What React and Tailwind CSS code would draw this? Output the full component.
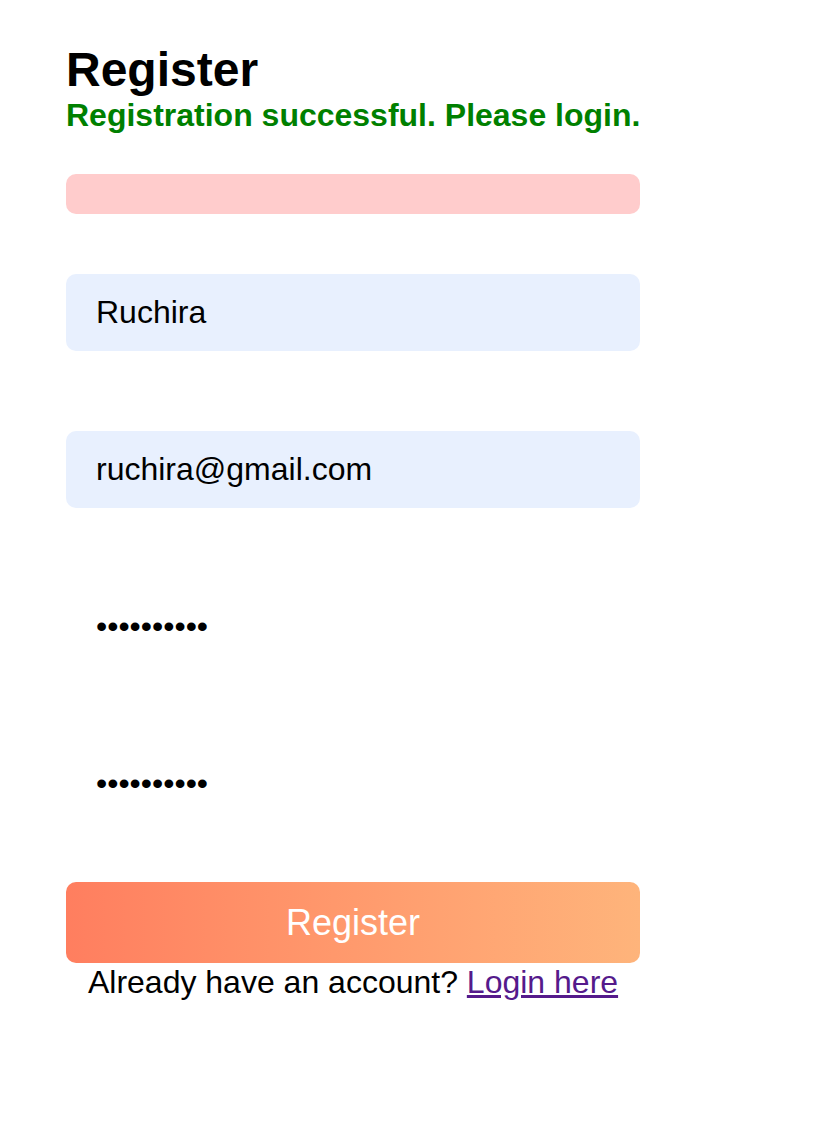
import React from "react";

export default function App() {
  const inputCls =
    "block w-full h-[77px] rounded-[10px] border-0 outline-none px-[30px] text-[32px] leading-[37px] text-black font-['Liberation_Sans',Arial,sans-serif]";
  return (
    <div className="min-h-[1132px] w-full bg-white font-['Liberation_Sans',Arial,sans-serif] text-black">
      <div className="ml-[66px] w-[574px] pt-[42px]">
        <h1 className="text-[48px] font-bold leading-[55px]">Register</h1>
        <p className="text-[32px] font-bold leading-[37px] text-[#008000] whitespace-nowrap">
          Registration successful. Please login.
        </p>
        <div className="mt-[40px] h-[40px] rounded-[10px] bg-[#ffcccc]"></div>
        <input
          className={`${inputCls} mt-[60px] bg-[#e8f0fe]`}
          type="text"
          readOnly
          value="Ruchira"
        />
        <input
          className={`${inputCls} mt-[80px] bg-[#e8f0fe]`}
          type="text"
          readOnly
          value="ruchira@gmail.com"
        />
        <input
          className={`${inputCls} mt-[80px] bg-transparent`}
          type="password"
          readOnly
          value="ruchira123"
        />
        <input
          className={`${inputCls} mt-[80px] bg-transparent`}
          type="password"
          readOnly
          value="ruchira123"
        />
        <button className="mt-[60px] block w-full h-[81px] rounded-[10px] bg-gradient-to-r from-[#ff7e5f] to-[#feb47b] text-white text-[36px] leading-[41px]">
          Register
        </button>
        <p className="mt-[1px] text-center text-[32px] leading-[37px]">
          Already have an account?{" "}
          <a href="#" className="text-[#551a8b] underline">
            Login here
          </a>
        </p>
      </div>
    </div>
  );
}
